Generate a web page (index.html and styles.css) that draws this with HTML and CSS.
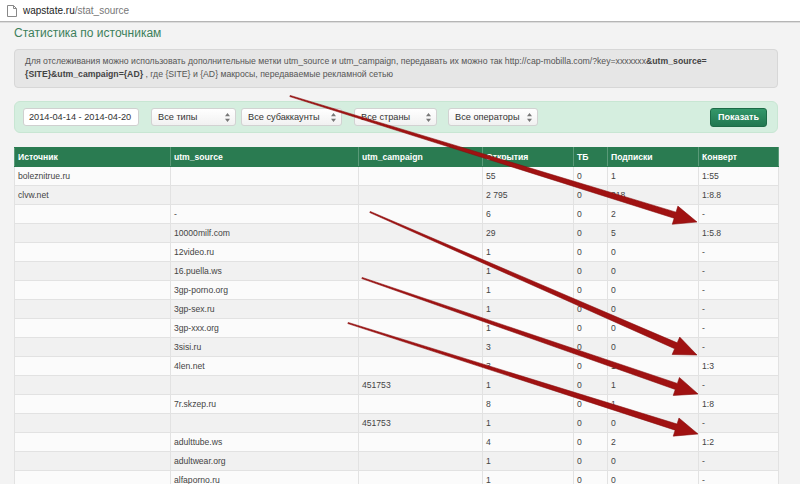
FILE: index.html
```html
<!DOCTYPE html>
<html lang="ru">
<head>
<meta charset="utf-8">
<title>Статистика по источникам</title>
<link rel="stylesheet" href="styles.css">
</head>
<body>
<div class="chrome">
  <svg class="page-icon" width="10" height="12" viewBox="0 0 10 12"><path d="M0.5 0.5 H6.5 L9.5 3.5 V11.5 H0.5 Z M6.5 0.5 V3.5 H9.5" fill="#fff" stroke="#888" stroke-width="1"/></svg>
  <span class="host">wapstate.ru</span><span class="path">/stat_source</span>
</div>
<div class="page">
  <h1 class="title">Статистика по источникам</h1>
  <div class="info">Для отслеживания можно использовать дополнительные метки utm_source и utm_campaign, передавать их можно так http://cap-mobilla.com/?key=xxxxxxx<b>&amp;utm_source=</b><br><b>{SITE}&amp;utm_campaign={AD}</b> , где {SITE} и {AD} макросы, передаваемые рекламной сетью</div>
  <div class="filters">
    <div class="input date">2014-04-14 - 2014-04-20</div>
    <div class="select s-types">Все типы<svg class="arr" width="5" height="9" viewBox="0 0 5 9"><path d="M2.5 0 L5 3.3 H0 Z M2.5 9 L5 5.7 H0 Z" fill="#777"/></svg></div>
    <div class="select s-sub">Все субаккаунты<svg class="arr" width="5" height="9" viewBox="0 0 5 9"><path d="M2.5 0 L5 3.3 H0 Z M2.5 9 L5 5.7 H0 Z" fill="#777"/></svg></div>
    <div class="select s-country">Все страны<svg class="arr" width="5" height="9" viewBox="0 0 5 9"><path d="M2.5 0 L5 3.3 H0 Z M2.5 9 L5 5.7 H0 Z" fill="#777"/></svg></div>
    <div class="select s-oper">Все операторы<svg class="arr" width="5" height="9" viewBox="0 0 5 9"><path d="M2.5 0 L5 3.3 H0 Z M2.5 9 L5 5.7 H0 Z" fill="#777"/></svg></div>
    <div class="btn">Показать</div>
  </div>
  <table class="stats">
    <colgroup>
      <col class="c1"><col class="c2"><col class="c3"><col class="c4"><col class="c5"><col class="c6"><col class="c7">
    </colgroup>
    <thead>
      <tr><th>Источник</th><th>utm_source</th><th>utm_campaign</th><th>Открытия</th><th>ТБ</th><th>Подписки</th><th>Конверт</th></tr>
    </thead>
    <tbody>
      <tr><td>boleznitrue.ru</td><td></td><td></td><td>55</td><td>0</td><td>1</td><td>1:55</td></tr>
      <tr><td>clvw.net</td><td></td><td></td><td>2 795</td><td>0</td><td>318</td><td>1:8.8</td></tr>
      <tr><td></td><td>-</td><td></td><td>6</td><td>0</td><td>2</td><td>-</td></tr>
      <tr><td></td><td>10000milf.com</td><td></td><td>29</td><td>0</td><td>5</td><td>1:5.8</td></tr>
      <tr><td></td><td>12video.ru</td><td></td><td>1</td><td>0</td><td>0</td><td>-</td></tr>
      <tr><td></td><td>16.puella.ws</td><td></td><td>1</td><td>0</td><td>0</td><td>-</td></tr>
      <tr><td></td><td>3gp-porno.org</td><td></td><td>1</td><td>0</td><td>0</td><td>-</td></tr>
      <tr><td></td><td>3gp-sex.ru</td><td></td><td>1</td><td>0</td><td>0</td><td>-</td></tr>
      <tr><td></td><td>3gp-xxx.org</td><td></td><td>1</td><td>0</td><td>0</td><td>-</td></tr>
      <tr><td></td><td>3sisi.ru</td><td></td><td>3</td><td>0</td><td>0</td><td>-</td></tr>
      <tr><td></td><td>4len.net</td><td></td><td>3</td><td>0</td><td>1</td><td>1:3</td></tr>
      <tr><td></td><td></td><td>451753</td><td>1</td><td>0</td><td>1</td><td>-</td></tr>
      <tr><td></td><td>7r.skzep.ru</td><td></td><td>8</td><td>0</td><td>1</td><td>1:8</td></tr>
      <tr><td></td><td></td><td>451753</td><td>1</td><td>0</td><td>0</td><td>-</td></tr>
      <tr><td></td><td>adulttube.ws</td><td></td><td>4</td><td>0</td><td>2</td><td>1:2</td></tr>
      <tr><td></td><td>adultwear.org</td><td></td><td>1</td><td>0</td><td>0</td><td>-</td></tr>
      <tr><td></td><td>alfaporno.ru</td><td></td><td>1</td><td>0</td><td>0</td><td>-</td></tr>
    </tbody>
  </table>
</div>
<svg class="arrows" width="800" height="484" viewBox="0 0 800 484">
  <g fill="#a01212" stroke="#870b0b" stroke-width="0.5" stroke-linejoin="round">
    <polygon transform="translate(290 96) rotate(17.2)" points="0,-0.6 403.1,-3.2 403.1,-9.5 426.1,0 403.1,9.5 403.1,3.2 0,0.6"/>
    <polygon transform="translate(370 212) rotate(23.62)" points="0,-0.6 333.9,-3.2 333.9,-9.5 356.9,0 333.9,9.5 333.9,3.2 0,0.6"/>
    <polygon transform="translate(362 278) rotate(19.04)" points="0,-0.6 332.5,-3.2 332.5,-9.5 355.5,0 332.5,9.5 332.5,3.2 0,0.6"/>
    <polygon transform="translate(348 323) rotate(17.6)" points="0,-0.6 344.2,-3.2 344.2,-9.5 367.2,0 344.2,9.5 344.2,3.2 0,0.6"/>
  </g>
</svg>
</body>
</html>
```
FILE: styles.css
```css
html, body {
  margin: 0;
  padding: 0;
}
body {
  width: 800px;
  height: 484px;
  overflow: hidden;
  background: #f3f3f3;
  font-family: "Liberation Sans", Arial, sans-serif;
  color: #333;
  position: relative;
}
.chrome {
  height: 21px;
  background: #fff;
  border-bottom: 1px solid #b5b5b5;
  box-shadow: 0 1px 0 #dcdcdc;
  display: flex;
  align-items: center;
  padding-left: 7px;
  font-size: 10px;
}
.page-icon {
  margin-right: 6px;
}
.host {
  color: #222;
}
.path {
  color: #777;
}
.page {
  padding: 0 22px 0 14px;
}
.title {
  margin: 2px 0 0 0;
  font-size: 12px;
  line-height: 18px;
  font-weight: normal;
  color: #3c7f5b;
}
.info {
  margin-top: 7px;
  background: #e6e6e6;
  border: 1px solid #d7d7d7;
  border-radius: 4px;
  padding: 5px 10px 6px 10px;
  font-size: 8.7px;
  line-height: 13px;
  color: #555;
  white-space: nowrap;
}
.info b {
  color: #444;
}
.filters {
  margin-top: 13px;
  height: 32px;
  box-sizing: border-box;
  background: #d5eedf;
  border: 1px solid #c8e6d3;
  border-radius: 6px;
  display: flex;
  align-items: center;
  padding: 0 10px 0 8px;
  font-size: 9.2px;
  color: #333;
}
.input, .select {
  height: 18px;
  box-sizing: border-box;
  display: flex;
  align-items: center;
  border-radius: 3px;
}
.input {
  width: 116px;
  background: #fff;
  border: 1px solid #d0d0d0;
  padding-left: 5px;
}
.select {
  position: relative;
  background: linear-gradient(#ffffff, #f1f1f1);
  border: 1px solid #d2d2d2;
  padding-left: 6px;
}
.select .arr {
  position: absolute;
  right: 5px;
  top: 4px;
}
.s-types { width: 85px; margin-left: 12px; }
.s-sub { width: 101px; margin-left: 5px; }
.s-country { width: 83px; margin-left: 12px; }
.s-oper { width: 90px; margin-left: 11px; }
.btn {
  margin-left: auto;
  width: 57px;
  height: 19px;
  box-sizing: border-box;
  border-radius: 3px;
  background: linear-gradient(#33976a, #217750);
  border: 1px solid #1d6b47;
  color: #fff;
  font-weight: bold;
  font-size: 9px;
  display: flex;
  align-items: center;
  justify-content: center;
}
.stats {
  margin-top: 14px;
  width: 764px;
  border-collapse: collapse;
  table-layout: fixed;
  font-size: 8.6px;
}
.c1 { width: 156px; }
.c2 { width: 188px; }
.c3 { width: 124px; }
.c4 { width: 91px; }
.c5 { width: 34px; }
.c6 { width: 91px; }
.c7 { width: 80px; }
.stats th, .stats td {
  height: 18px;
  line-height: 18px;
  padding: 0 3px;
  text-align: left;
  white-space: nowrap;
  overflow: hidden;
}
.stats th {
  background: #2a7b51;
  color: #fff;
  font-weight: bold;
  border: 1px solid #2a7b51;
  border-left-color: #5a9a78;
  border-right-color: #5a9a78;
}
.stats td {
  border: 1px solid #e2e2e2;
  color: #444;
}
.stats tbody tr:nth-child(odd) td {
  background: #fbfbfb;
}
.stats tbody tr:nth-child(even) td {
  background: #f1f1f1;
}
.arrows {
  position: absolute;
  left: 0;
  top: 0;
  pointer-events: none;
}
```
